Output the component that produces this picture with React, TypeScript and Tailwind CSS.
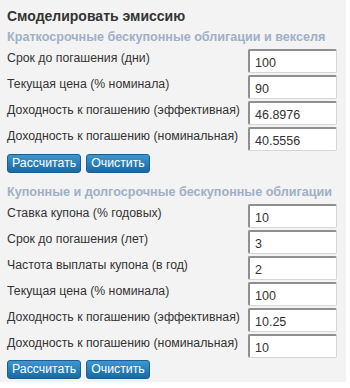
import React from "react";

type Row = { label: string; value: string };

const shortRows: Row[] = [
  { label: "Срок до погашения (дни)", value: "100" },
  { label: "Текущая цена (% номинала)", value: "90" },
  { label: "Доходность к погашению (эффективная)", value: "46.8976" },
  { label: "Доходность к погашению (номинальная)", value: "40.5556" },
];

const couponRows: Row[] = [
  { label: "Ставка купона (% годовых)", value: "10" },
  { label: "Срок до погашения (лет)", value: "3" },
  { label: "Частота выплаты купона (в год)", value: "2" },
  { label: "Текущая цена (% номинала)", value: "100" },
  { label: "Доходность к погашению (эффективная)", value: "10.25" },
  { label: "Доходность к погашению (номинальная)", value: "10" },
];

function Field({ label, value }: Row) {
  return (
    <div className="flex items-center justify-between h-[26px]">
      <span className="text-[12.3px] text-[#333] -mt-[6px] whitespace-nowrap min-w-0">{label}</span>
      <input
        defaultValue={value}
        className="shrink-0 w-[89px] h-[24px] bg-white rounded-[2px] border border-[#d6d6d6] border-t-[#8f8f8f] border-l-[#8f8f8f] border-t-2 border-l-2 px-[5px] pt-[3px] text-[12.5px] text-[#333] outline-none"
      />
    </div>
  );
}

function Buttons({ top }: { top: string }) {
  return (
    <div className={"flex gap-[5px] " + top}>
      <button className="h-[19px] px-[4px] rounded-[3px] bg-gradient-to-b from-[#3b97d3] to-[#1a6aa0] border border-[#1a5f8f] text-white text-[12.3px] leading-none">
        Рассчитать
      </button>
      <button className="h-[19px] px-[4px] rounded-[3px] bg-gradient-to-b from-[#3b97d3] to-[#1a6aa0] border border-[#1a5f8f] text-white text-[12.3px] leading-none">
        Очистить
      </button>
    </div>
  );
}

export default function App() {
  return (
    <div className="w-[350px] h-[388px] bg-white font-['Liberation_Sans',sans-serif]">
      <div className="w-[346px] h-[382px] bg-[#f3f3f3] pl-[7px] pr-[9px] pt-[6px]">
        <h1 className="text-[14px] font-bold text-[#333] h-[22px] leading-[20px]">
          Смоделировать эмиссию
        </h1>
        <h2 className="text-[12.6px] font-bold text-[#9fb0c6] h-[20px] leading-[18px] whitespace-nowrap">
          Краткосрочные бескупонные облигации и векселя
        </h2>
        {shortRows.map((r) => (
          <Field key={r.label} {...r} />
        ))}
        <Buttons top="mt-[2px]" />
        <h2 className="text-[12.6px] font-bold text-[#9fb0c6] h-[30px] pt-[9px] leading-[20px] whitespace-nowrap">
          Купонные и долгосрочные бескупонные облигации
        </h2>
        {couponRows.map((r) => (
          <Field key={r.label + r.value} {...r} />
        ))}
        <Buttons top="mt-[1px]" />
      </div>
    </div>
  );
}
